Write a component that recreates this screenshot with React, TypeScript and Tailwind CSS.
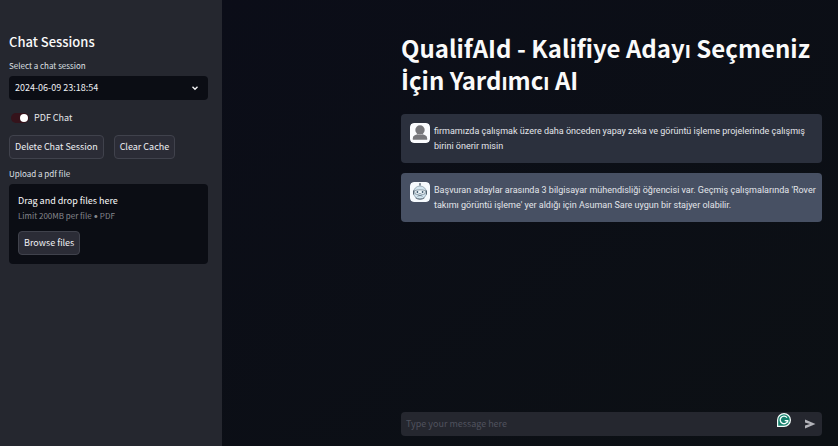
import { useState } from "react";
import type { ReactNode } from "react";

function UserAvatar() {
  return (
    <svg viewBox="0 0 20 20" className="h-5 w-5 shrink-0 rounded" aria-label="User" role="img">
      <rect width="20" height="20" rx="4" fill="#fbfcfe" />
      <circle cx="10" cy="7" r="4.7" fill="#77777b" />
      <path d="M2.8 16.8v-1.6c0-2.3 2.6-3.6 4.9-3.9 1.4.8 3.200.8 4.600 0 2.300.3 4.900 1.600 4.900 3.900v1.600z" fill="#77777b" />
    </svg>
  );
}

function BotAvatar() {
  return (
    <svg viewBox="0 0 20 20" className="h-5 w-5 shrink-0 rounded" aria-label="Assistant" role="img">
      <rect width="20" height="20" rx="4" fill="#f6fafd" />
      <path d="M10 4V2" stroke="#53626f" strokeWidth="0.9" />
      <circle cx="10" cy="1.900" r="0.8" fill="#53626f" />
      <circle cx="10" cy="10.500" r="6.500" fill="#d3e5ef" stroke="#7f93a1" strokeWidth="0.7" />
      <path d="M3.500 8.500v4M16.500 8.500v4" stroke="#53626f" strokeWidth="1" />
      <path d="M4.500 8.600c3-1 8-1 11 0l-.6 3.200c-1.600.9-3.300.7-4.900-.4-1.600 1.100-3.300 1.300-4.900.4z" fill="#eef7fb" stroke="#53626f" strokeWidth="0.6" />
      <circle cx="7.400" cy="10" r="0.9" fill="#3c566b" />
      <circle cx="12.600" cy="10" r="0.9" fill="#3c566b" />
      <path d="M7.500 14.200c1.500-.9 3.500-.9 5 0" fill="none" stroke="#53626f" strokeWidth="0.8" />
      <path d="M5.500 15.800c2.600 1.900 6.400 1.900 9 0" fill="none" stroke="#53626f" strokeWidth="0.9" />
    </svg>
  );
}

function Message({ avatar, tone, children }: { avatar: ReactNode; tone: string; children: ReactNode }) {
  return (
    <article className={"flex items-start gap-1 rounded py-[9px] pr-1 pl-[9px] " + tone}>
      {avatar}
      <p className="min-w-0 flex-1 pt-px font-[Roboto,sans-serif] text-[9px] leading-[15px] text-[#e3e5ea]">{children}</p>
    </article>
  );
}

const button =
  "h-6 rounded border border-[#40424c] bg-[#2b2c36] px-[5px] text-[9px] leading-[14px] whitespace-nowrap text-[#eff0f4]";

export default function App() {
  const [pdf, setPdf] = useState(true);
  return (
    <div className="flex min-h-screen bg-[#0c0f16] font-['Noto_Sans_CJK_SC',Lato,sans-serif] text-[#fafafa]">
      <aside className="w-[222px] shrink-0 bg-[#25272f] pt-8 pr-[14px] pl-[9px]">
        <h2 className="text-[13px] leading-5 font-medium">Chat Sessions</h2>
        <label htmlFor="session" className="mt-2 block text-[8px] leading-3 text-[#dfe0e5]">
          Select a chat session
        </label>
        <div className="relative mt-1">
          <select
            id="session"
            className="block h-6 w-full appearance-none rounded bg-[#0b0d14] px-[6px] text-[9px] leading-[14px] text-[#eff0f4]"
          >
            <option>2024-06-09 23:18:54</option>
          </select>
          <svg viewBox="0 0 8 8" className="pointer-events-none absolute top-2 right-[9px] h-2 w-2" aria-hidden="true">
            <path d="M1.500 2.700 4 5.200l2.500-2.500" fill="none" stroke="#f4f4f6" strokeWidth="1.400" />
          </svg>
        </div>
        <label className="mt-[11px] flex items-center gap-[5px] text-[9px] leading-[14px] text-[#e6e7eb]">
          <input
            type="checkbox"
            checked={pdf}
            onChange={(e) => setPdf(e.target.checked)}
            className="ml-[2px] flex h-[10px] w-[18px] appearance-none items-center rounded-full bg-[#35131b] px-px before:h-2 before:w-2 before:rounded-full before:bg-white checked:justify-end"
          />
          PDF Chat
        </label>
        <div className="mt-[10px] flex gap-[10px]">
          <button type="button" className={button}>Delete Chat Session</button>
          <button type="button" className={button}>Clear Cache</button>
        </div>
        <p className="mt-[9px] text-[8px] leading-3 text-[#dfe0e5]">Upload a pdf file</p>
        <section className="mt-1 flex flex-col items-start rounded bg-[#0b0d14] px-[9px] pt-[10px] pb-[9px]">
          <p className="text-[9px] leading-[14px]">Drag and drop files here</p>
          <p className="mt-[2px] mb-[9px] text-[8px] leading-3 text-[#85878d]">
            Limit 200MB per file <span className="font-[Lato,sans-serif]">•</span> PDF
          </p>
          <button type="button" className={button}>Browse files</button>
        </section>
      </aside>
      <main className="flex min-w-0 flex-1 flex-col bg-linear-to-br from-[#0b0d18] to-[#0c1014] px-4 pt-8 pb-[10px]">
        <div className="ml-auto flex w-full max-w-[421px] flex-1 flex-col">
          <h1 className="text-[24px] leading-8 font-bold">
            QualifAId - Kalifiye Adayı Seçmeniz <span className="font-['Open_Sans',sans-serif] leading-none">İ</span>çin Yardımcı AI
          </h1>
          <div className="mt-[18px] flex flex-col gap-[10px]">
            <Message avatar={<UserAvatar />} tone="bg-[#2b303d]">
              firmamızda çalışmak üzere daha önceden yapay zeka ve görüntü işleme projelerinde çalışmış birini önerir misin
            </Message>
            <Message avatar={<BotAvatar />} tone="bg-[#475063]">
              Başvuran adaylar arasında 3 bilgisayar mühendisliği öğrencisi var. Geçmiş çalışmalarında 'Rover takımı görüntü işleme' yer aldığı için Asuman Sare uygun bir stajyer olabilir.
            </Message>
          </div>
          <form className="mt-auto flex h-6 items-center rounded bg-[#25272f] pr-[6px] pl-[5px]" onSubmit={(e) => e.preventDefault()}>
            <input
              type="text"
              aria-label="Message"
              placeholder="Type your message here"
              className="min-w-0 flex-1 bg-transparent text-[9px] leading-[14px] outline-none placeholder:text-[#50525e]"
            />
            <svg viewBox="0 0 16 16" className="mr-3 mb-2 h-4 w-4" aria-hidden="true">
              <path d="M1 15V8a7 7 0 1 1 7 7z" fill="#f7fffd" />
              <path d="M2.200 13.800V8a5.800 5.800 0 1 1 5.800 5.800z" fill="#16806d" />
              <path d="M11 5.600A3.800 3.800 0 1 0 11.700 8.700H8.700M11.700 8.700v2" fill="none" stroke="#f7fffd" strokeWidth="1.300" />
            </svg>
            <button type="submit" aria-label="Send" className="h-3 w-3">
              <svg viewBox="0 0 12 12" className="h-3 w-3">
                <path d="M1 1.500 11.500 6 1 10.500V7.500L6 6 1 4.500z" fill="#b2b3b9" />
              </svg>
            </button>
          </form>
        </div>
      </main>
    </div>
  );
}
